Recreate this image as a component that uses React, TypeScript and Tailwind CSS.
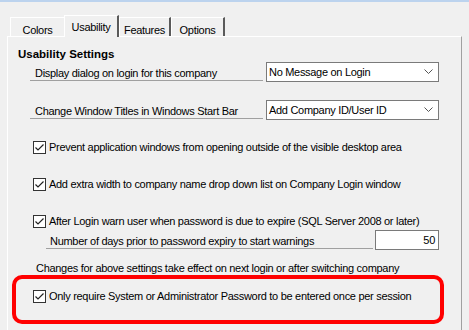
import React from 'react';

const font = { fontFamily: '"Liberation Sans", Arial, sans-serif' };

const Check = () => (
  <div className="w-[13px] h-[13px] shrink-0 border border-[#333333] bg-white flex items-center justify-center">
    <svg width="11" height="11" viewBox="0 0 11 11" fill="none">
      <polyline points="1.5,5.5 4,8 9.5,2.5" stroke="#222222" strokeWidth="1.2" />
    </svg>
  </div>
);

const Chevron = () => (
  <svg width="9" height="6" viewBox="0 0 9 6" fill="none">
    <polyline points="0.5,0.5 4.5,4.5 8.5,0.5" stroke="#555555" strokeWidth="1" />
  </svg>
);

const Combo = ({ value }: { value: string }) => (
  <div className="ml-[3px] w-[173px] h-[20px] border border-[#7a7a7a] bg-white flex items-center justify-between pl-[2px] pr-[5px]">
    <span>{value}</span>
    <Chevron />
  </div>
);

const CheckRow = ({ label, className = '' }: { label: string; className?: string }) => (
  <div className={`flex items-center h-[14px] ml-[25px] ${className}`}>
    <Check />
    <span className="ml-[3px]">{label}</span>
  </div>
);

const tabs = [
  { name: 'Colors', w: 'w-[54px]', active: false, edge: false },
  { name: 'Usability', w: 'w-[55px]', active: true, edge: true },
  { name: 'Features', w: 'w-[52px]', active: false, edge: true },
  { name: 'Options', w: 'w-[54px]', active: false, edge: true },
];

export default function App() {
  return (
    <div
      className="w-[469px] h-[330px] overflow-hidden bg-[#f0f0f0] text-[11px] leading-[14px] tracking-[-0.3px] text-black"
      style={font}
    >
      <div className="h-[2px] bg-[#bcd3ee]" />

      {/* tab strip */}
      <div className="flex items-end h-[21px] mt-[13px] pl-[10px]">
        {tabs.map((t) => (
          <div
            key={t.name}
            className={`${t.w} ${t.active ? 'h-[22px] -mb-[1px] relative z-10 pt-[4px]' : 'h-[19px] pt-[5px]'} bg-[#f0f0f0] border-t border-l border-white ${t.edge ? 'border-r-2 border-r-[#5a5a5a]' : ''} text-center`}
          >
            {t.name}
          </div>
        ))}
      </div>

      {/* panel */}
      <div className="ml-[7px] w-[455px] h-[300px] border-t border-l border-white border-r border-r-[#a0a0a0]">
        <div className="mt-[10px] ml-[10px] font-bold text-[11.5px] tracking-normal">Usability Settings</div>

        <div className="flex mt-[1px] ml-[22px]">
          <div className="w-[233px] h-[19px] flex items-end border-b border-[#a0a0a0] pl-[5px]">
            Display dialog on login for this company
          </div>
          <Combo value="No Message on Login" />
        </div>

        <div className="flex mt-[18px] ml-[22px]">
          <div className="w-[233px] h-[19px] flex items-end border-b border-[#a0a0a0] pl-[5px]">
            Change Window Titles in Windows Start Bar
          </div>
          <Combo value="Add Company ID/User ID" />
        </div>

        <CheckRow className="mt-[20px]" label="Prevent application windows from opening outside of the visible desktop area" />
        <CheckRow className="mt-[23px]" label="Add extra width to company name drop down list on Company Login window" />
        <CheckRow className="mt-[23px]" label="After Login warn user when password is due to expire (SQL Server 2008 or later)" />

        <div className="flex mt-[2px] ml-[38px]">
          <div className="w-[327px] h-[19px] flex items-end border-b border-[#a0a0a0] pl-[4px]">
            Number of days prior to password expiry to start warnings
          </div>
          <div className="ml-[2px] w-[64px] h-[20px] border border-[#7a7a7a] bg-white flex items-center justify-end pr-[3px]">
            50
          </div>
        </div>

        <div className="mt-[11px] ml-[28px]">Changes for above settings take effect on next login or after switching company</div>

        <div className="ml-[4px] w-[432px] h-[49px] border-[4px] border-[#ff0000] rounded-[10px] pt-[10px]">
          <div className="flex items-center h-[14px] ml-[17px]">
            <Check />
            <span className="ml-[3px]">Only require System or Administrator Password to be entered once per session</span>
          </div>
        </div>
      </div>
    </div>
  );
}
